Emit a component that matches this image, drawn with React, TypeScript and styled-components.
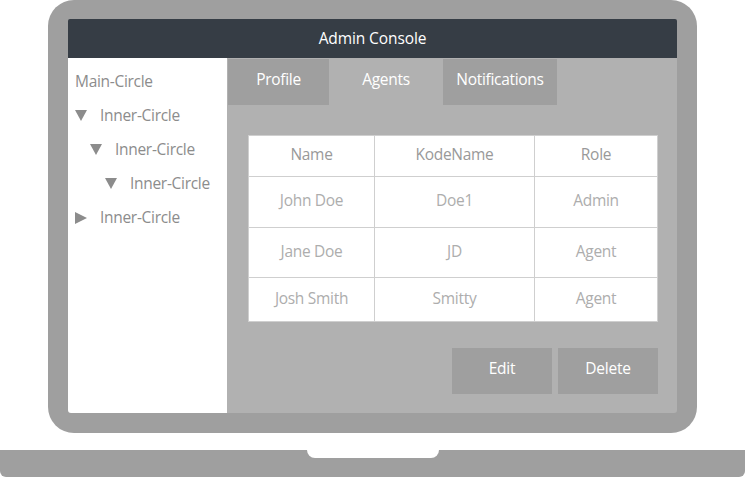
import React from "react";
import styled, { createGlobalStyle } from "styled-components";

const Global = createGlobalStyle`
  html, body { margin: 0; padding: 0; background: #ffffff; }
  body { font-family: "Open Sans", "Noto Sans", sans-serif; }
`;

const Page = styled.div`
  width: 745px;
  height: 477px;
  display: flex;
  flex-direction: column;
  align-items: center;
  overflow: hidden;
`;

const LaptopBody = styled.div`
  width: 649px;
  height: 433px;
  box-sizing: border-box;
  background: #9f9f9f;
  border-radius: 26px;
  padding: 19px 20px 20px 20px;
  display: flex;
`;

const Screen = styled.div`
  flex: 1;
  display: flex;
  flex-direction: column;
  border-radius: 2px 2px 3px 3px;
  overflow: hidden;
`;

const TitleBar = styled.div`
  height: 39px;
  background: #363d45;
  color: #ffffff;
  font-size: 15.5px;
  display: flex;
  align-items: center;
  justify-content: center;
  padding-bottom: 2px;
  box-sizing: border-box;
  letter-spacing: -0.1px;
`;

const Main = styled.div`
  flex: 1;
  display: flex;
`;

const Sidebar = styled.div`
  width: 160px;
  background: #ffffff;
  display: flex;
  flex-direction: column;
  padding-top: 6px;
  box-sizing: border-box;
`;

const TreeItem = styled.div<{ $indent: number }>`
  height: 34px;
  display: flex;
  align-items: center;
  padding-left: ${(p) => 7 + p.$indent * 15}px;
  color: #8c8c8c;
  font-size: 15.5px;
  letter-spacing: -0.3px;
`;

const Caret = styled.span`
  width: 25px;
  display: inline-flex;
  align-items: center;
  padding-top: 1px;
  svg { display: block; }
`;

const Content = styled.div`
  flex: 1;
  background: #b1b1b1;
  display: flex;
  flex-direction: column;
  padding: 1px 19px 0 1px;
`;

const Tabs = styled.div`
  display: flex;
  height: 46px;
`;

const Tab = styled.div<{ $active?: boolean; $width: number }>`
  width: ${(p) => p.$width}px;
  background: ${(p) => (p.$active ? "transparent" : "#9f9f9f")};
  color: #ffffff;
  font-size: 15.5px;
  display: flex;
  justify-content: center;
  padding-top: 9px;
  box-sizing: border-box;
  letter-spacing: -0.3px;
`;

const TableWrap = styled.div`
  margin: 30px 0 0 20px;
`;

const Table = styled.table`
  width: 409px;
  border-collapse: collapse;
  background: #ffffff;
  table-layout: fixed;
`;

const Cell = styled.td<{ $head?: boolean }>`
  border: 1px solid #cfcfcf;
  text-align: center;
  font-size: 15.5px;
  letter-spacing: -0.3px;
  color: ${(p) => (p.$head ? "#999999" : "#adadad")};
  padding: 0 0 4px 0;
`;

const Row = styled.tr<{ $h: number }>`
  height: ${(p) => p.$h}px;
`;

const Actions = styled.div`
  display: flex;
  justify-content: flex-end;
  gap: 6px;
  margin-top: 26px;
`;

const Button = styled.div`
  width: 100px;
  height: 46px;
  background: #9f9f9f;
  color: #ffffff;
  font-size: 15.5px;
  letter-spacing: -0.2px;
  display: flex;
  align-items: center;
  justify-content: center;
  padding-bottom: 7px;
  box-sizing: border-box;
`;

const Base = styled.div`
  margin-top: 17px;
  width: 745px;
  height: 27px;
  background: #9f9f9f;
  border-radius: 0 0 6px 6px;
  display: flex;
  justify-content: center;
`;

const Notch = styled.div`
  width: 132px;
  height: 8px;
  background: #ffffff;
  border-radius: 0 0 8px 8px;
`;

const Down = () => (
  <svg width="12" height="11" viewBox="0 0 12 11">
    <polygon points="0,0 12,0 6,11" fill="#8c8c8c" />
  </svg>
);

const Right = () => (
  <svg width="12" height="12" viewBox="0 0 12 12">
    <polygon points="0,0 12,6 0,12" fill="#8c8c8c" />
  </svg>
);

const rows = [
  { h: 51, c: ["John Doe", "Doe1", "Admin"] },
  { h: 50, c: ["Jane Doe", "JD", "Agent"] },
  { h: 44, c: ["Josh Smith", "Smitty", "Agent"] },
];

export default function App() {
  return (
    <Page>
      <Global />
      <LaptopBody>
        <Screen>
          <TitleBar>Admin Console</TitleBar>
          <Main>
            <Sidebar>
              <TreeItem $indent={0}>Main-Circle</TreeItem>
              <TreeItem $indent={0}>
                <Caret><Down /></Caret>Inner-Circle
              </TreeItem>
              <TreeItem $indent={1}>
                <Caret><Down /></Caret>Inner-Circle
              </TreeItem>
              <TreeItem $indent={2}>
                <Caret><Down /></Caret>Inner-Circle
              </TreeItem>
              <TreeItem $indent={0}>
                <Caret><Right /></Caret>Inner-Circle
              </TreeItem>
            </Sidebar>
            <Content>
              <Tabs>
                <Tab $width={101}>Profile</Tab>
                <Tab $width={114} $active>Agents</Tab>
                <Tab $width={114}>Notifications</Tab>
              </Tabs>
              <TableWrap>
                <Table>
                  <colgroup>
                    <col style={{ width: 126 }} />
                    <col style={{ width: 160 }} />
                    <col style={{ width: 123 }} />
                  </colgroup>
                  <tbody>
                    <Row $h={41}>
                      <Cell $head>Name</Cell>
                      <Cell $head>KodeName</Cell>
                      <Cell $head>Role</Cell>
                    </Row>
                    {rows.map((r, i) => (
                      <Row key={i} $h={r.h}>
                        {r.c.map((t, j) => (
                          <Cell key={j}>{t}</Cell>
                        ))}
                      </Row>
                    ))}
                  </tbody>
                </Table>
              </TableWrap>
              <Actions>
                <Button>Edit</Button>
                <Button>Delete</Button>
              </Actions>
            </Content>
          </Main>
        </Screen>
      </LaptopBody>
      <Base>
        <Notch />
      </Base>
    </Page>
  );
}
